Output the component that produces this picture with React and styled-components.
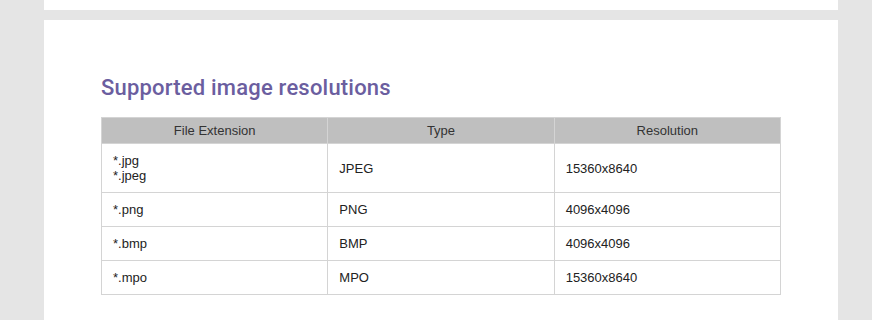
import React from 'react';
import styled, {createGlobalStyle} from 'styled-components';

const GlobalStyle = createGlobalStyle`
    html, body {
        margin: 0;
        padding: 0;
        background: #e5e5e5;
    }
    body {
        font-family: "Liberation Sans", Arial, sans-serif;
        color: #222222;
    }
`;

const Page = styled.div`
    display: flex;
    flex-direction: column;
    gap: 10px;
    padding: 0 34px 0 44px;
    height: 320px;
    overflow: hidden;
`;

const Panel = styled.section`
    flex-shrink: 0;
    background: #ffffff;
    width: 794px;
    height: ${props => props.$height || 'auto'};
    box-sizing: border-box;
    padding: ${props => props.$padded ? '56px 57px 40px' : '0'};
`;

const Title = styled.h2`
    margin: 0 0 17px;
    font-family: Roboto, "Liberation Sans", sans-serif;
    font-size: 22px;
    line-height: 24px;
    font-weight: 500;
    color: #6b5e9f;
    letter-spacing: 0.2px;
`;

const Table = styled.table`
    width: 680px;
    border-collapse: collapse;
    table-layout: fixed;
    font-size: 13px;
`;

const HeadCell = styled.th`
    background: #bfbfbf;
    border: 1px solid #d4d4d4;
    font-weight: normal;
    color: #333333;
    height: 25px;
    padding: 0;
    text-align: center;
`;

const Cell = styled.td`
    border: 1px solid #d4d4d4;
    padding: 0 11px;
    height: ${props => props.$tall ? '48px' : '33px'};
    line-height: 15px;
    color: #222222;
    vertical-align: middle;
`;

const rows = [
    {ext: ['*.jpg', '*.jpeg'], type: 'JPEG', res: '15360x8640'},
    {ext: ['*.png'], type: 'PNG', res: '4096x4096'},
    {ext: ['*.bmp'], type: 'BMP', res: '4096x4096'},
    {ext: ['*.mpo'], type: 'MPO', res: '15360x8640'},
];

const App = () => {
    return (
        <>
            <GlobalStyle/>
            <Page>
                <Panel $height="10px"/>
                <Panel $padded>
                    <Title>Supported image resolutions</Title>
                    <Table>
                        <thead>
                        <tr>
                            <HeadCell>File Extension</HeadCell>
                            <HeadCell>Type</HeadCell>
                            <HeadCell>Resolution</HeadCell>
                        </tr>
                        </thead>
                        <tbody>
                        {rows.map(row => (
                            <tr key={row.type}>
                                <Cell $tall={row.ext.length > 1}>
                                    {row.ext.map(e => <div key={e}>{e}</div>)}
                                </Cell>
                                <Cell $tall={row.ext.length > 1}>{row.type}</Cell>
                                <Cell $tall={row.ext.length > 1}>{row.res}</Cell>
                            </tr>
                        ))}
                        </tbody>
                    </Table>
                </Panel>
            </Page>
        </>
    )
};

export default App;
